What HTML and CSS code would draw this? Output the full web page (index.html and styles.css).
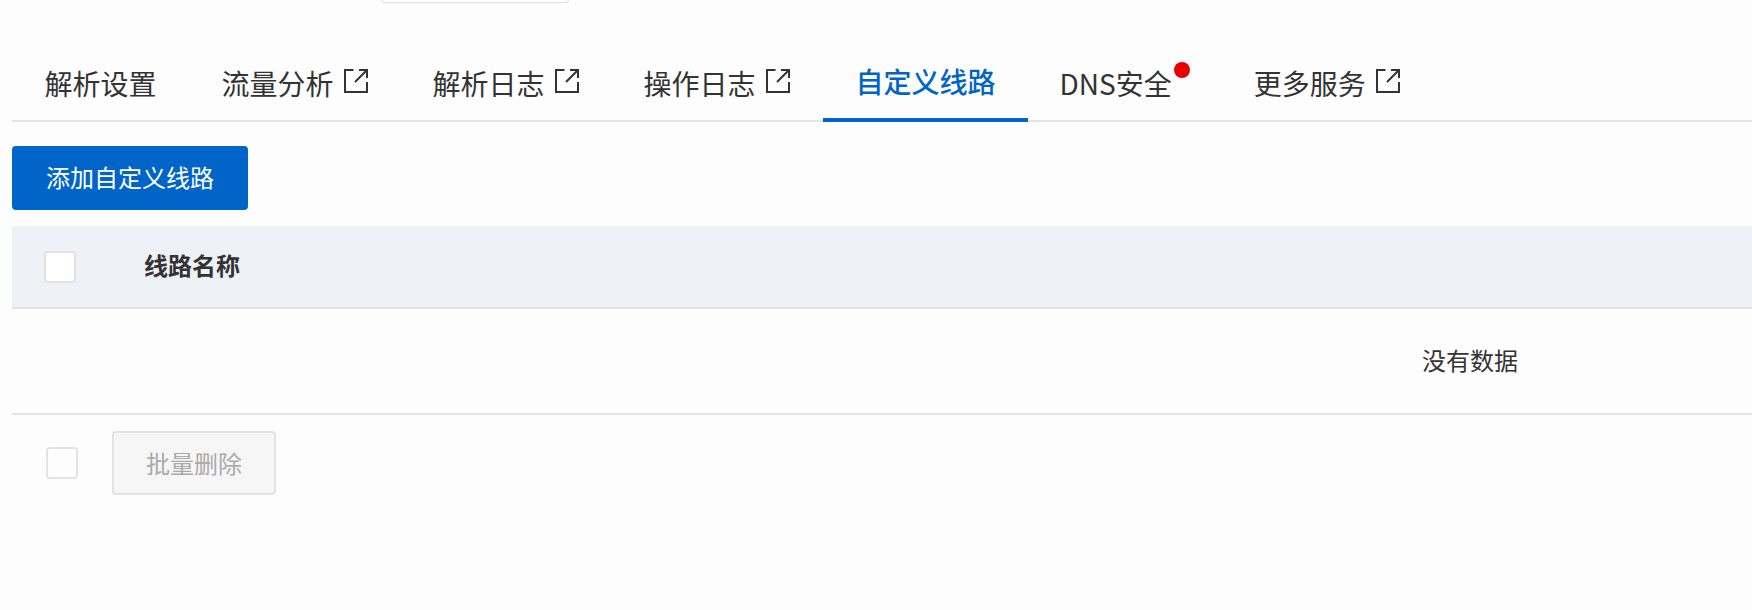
FILE: index.html
```html
<!DOCTYPE html>
<html>
	<head>
		<meta charset="UTF-8">
		<title>自定义线路</title>
		<link rel="stylesheet" href="styles.css">
	</head>
	<body>
		<div class="top-strip"><div class="top-input"></div></div>
		<div class="tabs">
			<a class="tab">解析设置</a>
			<a class="tab">流量分析<svg class="ext-icon" viewBox="0 0 24 24"><use href="#ext"></use></svg></a>
			<a class="tab">解析日志<svg class="ext-icon" viewBox="0 0 24 24"><use href="#ext"></use></svg></a>
			<a class="tab">操作日志<svg class="ext-icon" viewBox="0 0 24 24"><use href="#ext"></use></svg></a>
			<a class="tab active">自定义线路</a>
			<a class="tab tab-dot">DNS安全<i class="dot"></i></a>
			<a class="tab">更多服务<svg class="ext-icon" viewBox="0 0 24 24"><use href="#ext"></use></svg></a>
		</div>
		<svg class="defs" width="0" height="0">
			<symbol id="ext" viewBox="0 0 24 24">
				<path d="M9.5 1H1V23H23V13M11 13L22 2M15 1H23V9" fill="none" stroke="currentColor" stroke-width="2"></path>
			</symbol>
		</svg>
		<div class="content">
			<button class="btn-primary"><span>添加自定义线路</span></button>
			<div class="table">
				<div class="table-head">
					<span class="check"></span>
					<span class="head-name">线路名称</span>
				</div>
				<div class="table-empty">没有数据</div>
			</div>
			<div class="table-foot">
				<span class="check foot-check"></span>
				<button class="btn-disabled"><span>批量删除</span></button>
			</div>
		</div>
	</body>
</html>
```

FILE: styles.css
```css
*{
	margin: 0;
	padding: 0;
	box-sizing: border-box;
}
html,body{
	height: 100%;
	overflow: hidden;
}
body{
	background: #fdfdfd;
	color: #333;
	font-family: "Noto Sans CJK SC", "Noto Sans", sans-serif;
	font-size: 24px;
}
.top-strip{
	height: 3px;
	padding-left: 381px;
}
.top-input{
	width: 188px;
	height: 3px;
	background: #fff;
	border: 1px solid #ddd;
	border-top: 0;
	border-radius: 0 0 4px 4px;
}
.tabs{
	display: flex;
	height: 119px;
	margin-left: 12px;
	border-bottom: 2px solid #e3e3e3;
}
.tab{
	display: flex;
	align-items: center;
	position: relative;
	height: 119px;
	padding: 40px 32.5px 0;
	font-size: 28px;
	line-height: 40px;
	white-space: nowrap;
}
.tab.active{
	margin: 0 -1px 0 1px;
	color: #0064c8;
	font-weight: 500;
	border-bottom: 4px solid #0064c8;
}
.tab-dot{
	padding-right: 49.5px;
}
.ext-icon{
	width: 24px;
	height: 24px;
	margin-left: 10px;
	margin-top: -4px;
}
.dot{
	position: absolute;
	top: 59px;
	right: 31.5px;
	width: 16px;
	height: 16px;
	border-radius: 50%;
	background: #e60000;
}
.defs{
	position: absolute;
}
.content{
	padding: 24px 0 0 12px;
}
.btn-primary{
	display: block;
	width: 236px;
	height: 64px;
	padding-bottom: 4px;
	border: 0;
	border-radius: 4px;
	background: #0064c8;
	color: #fff;
	font: inherit;
}
.table{
	width: 2916px;
	margin-top: 16px;
}
.table-head{
	display: flex;
	align-items: center;
	height: 83px;
	padding-left: 32px;
	background: #eef1f6;
	border-bottom: 2px solid #e3e3e3;
}
.check{
	display: block;
	width: 32px;
	height: 32px;
	background: #fff;
	border: 2px solid #e3e3e3;
	border-radius: 4px;
}
.head-name{
	margin-left: 68px;
	padding-bottom: 4px;
	font-weight: 700;
}
.table-empty{
	height: 106px;
	padding: 28px 0 0 1410px;
	line-height: 46px;
	border-bottom: 2px solid #e3e3e3;
}
.table-foot{
	display: flex;
	align-items: center;
	margin-top: 16px;
}
.foot-check{
	margin-left: 34px;
	background: #fdfdfd;
}
.btn-disabled{
	width: 164px;
	height: 64px;
	padding-bottom: 2px;
	margin-left: 34px;
	background: #f6f6f6;
	border: 2px solid #e3e3e3;
	border-radius: 4px;
	color: #aaa;
	font: inherit;
}
```
